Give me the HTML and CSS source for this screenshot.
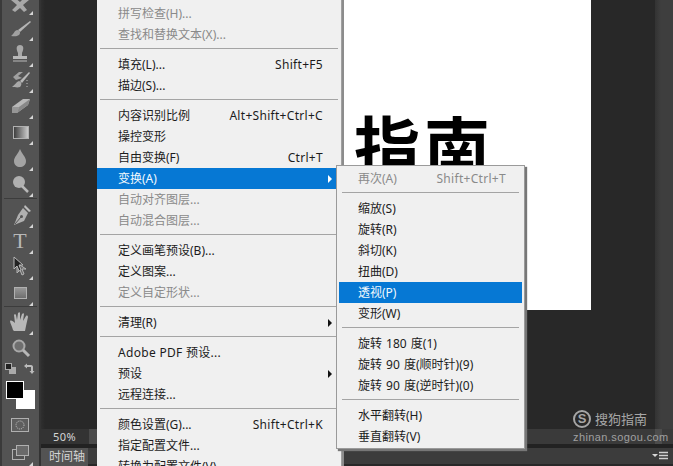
FILE: index.html
```html
<!DOCTYPE html>
<html lang="zh">
<head>
<meta charset="utf-8">
<title>变换 透视</title>
<link rel="stylesheet" href="styles.css">
</head>
<body>
<div class="app">
  <aside class="toolbar">
    <div class="tool first"><svg class="ic" viewBox="0 0 26 26"><path d="M4 11 7 8 13 13 18 8 22 11 16 16 20 21 17 23 13 19 8 23 5 21 10 16Z" fill="#a8a8a8"/><path class="cn" d="M26 22V26H22Z"/></svg></div>
    <div class="tool"><svg class="ic" viewBox="0 0 26 26"><path d="M23 6 24 7 13 17 11 15Z" fill="#b4b4b4"/><path d="M10 15C13 15 14 18 12 20 9 22 7 21 4 21 7 19 7 16 10 15Z" fill="#a0a0a0"/><path class="cn" d="M26 22V26H22Z"/></svg></div>
    <div class="tool"><svg class="ic" viewBox="0 0 26 26"><path d="M11 12C9 8 9 4 13 4 17 4 17 8 15 12V15H11Z" fill="#a8a8a8"/><rect x="6" y="15" width="14" height="3" fill="#b8b8b8"/><rect x="6" y="19" width="14" height="2" fill="#868686"/><path class="cn" d="M26 22V26H22Z"/></svg></div>
    <div class="tool"><svg class="ic" viewBox="0 0 26 26"><path d="M6 10 12 5H16L11 9 15 11 9 13Z" fill="#a0a0a0"/><path d="M22 5 23 6 15 16 13 14Z" fill="#b8b8b8"/><path d="M12 14C15 15 15 18 13 20 10 21 8 20 5 20 8 18 9 15 12 14Z" fill="#a8a8a8"/><path d="M20 13V20" stroke="#bbb" stroke-dasharray="1 2"/><path class="cn" d="M26 22V26H22Z"/></svg></div>
    <div class="tool"><svg class="ic" viewBox="0 0 26 26"><path d="M5 14 16 6H23L21 12 10 20H5Z" fill="#b8b8b8"/><path d="M5 14H12L10 20H5Z" fill="#969696"/><path d="M12 14 23 6 21 12 10 20Z" fill="#888"/><path class="cn" d="M26 22V26H22Z"/></svg></div>
    <div class="tool"><svg class="ic" viewBox="0 0 26 26"><defs><linearGradient id="g1"><stop offset="0" stop-color="#3a3a3a"/><stop offset="1" stop-color="#cfcfcf"/></linearGradient></defs><rect x="6.500" y="7.500" width="15" height="12" fill="url(#g1)" stroke="#b0b0b0"/><path class="cn" d="M26 22V26H22Z"/></svg></div>
    <div class="tool"><svg class="ic" viewBox="0 0 26 26"><path d="M13 4C15 9 19 12 19 16 19 20 16 22 13 22 10 22 7 20 7 16 7 12 11 9 13 4Z" fill="#a4a4a4"/><path class="cn" d="M26 22V26H22Z"/></svg></div>
    <div class="tool"><svg class="ic" viewBox="0 0 26 26"><circle cx="12" cy="11" r="6" fill="#b0b0b0"/><path d="M15 15 21 21" stroke="#b8b8b8" stroke-width="2.500"/><path class="cn" d="M26 22V26H22Z"/></svg></div>
    <div class="sep"></div>
    <div class="tool"><svg class="ic" viewBox="0 0 26 26"><path d="M16 6 21 11 17 19 7 23 11 13Z" fill="#b0b0b0"/><path d="M8 22 14 15" stroke="#555"/><circle cx="14.500" cy="14.500" r="1.500" fill="#555"/><path d="M18 3 24 9 22 10 17 5Z" fill="#bdbdbd"/><path class="cn" d="M26 22V26H22Z"/></svg></div>
    <div class="tool"><svg class="ic" viewBox="0 0 26 26"><text x="13" y="20" text-anchor="middle" class="tglyph">T</text><path class="cn" d="M26 22V26H22Z"/></svg></div>
    <div class="tool"><svg class="ic" viewBox="0 0 26 26"><path d="M10 9V19L13 16 15 21 17 20 15 15 19 15Z" fill="#6a6a6a" stroke="#b4b4b4"/><path d="M7 3V15L10 12 12 17 14 16 12 11 16 11Z" fill="#222" stroke="#b8b8b8"/><path class="cn" d="M26 22V26H22Z"/></svg></div>
    <div class="tool"><svg class="ic" viewBox="0 0 26 26"><defs><linearGradient id="g2" x2="0" y2="1"><stop offset="0" stop-color="#999"/><stop offset="1" stop-color="#6c6c6c"/></linearGradient></defs><rect x="7.500" y="7.500" width="12" height="11" fill="url(#g2)" stroke="#b0b0b0"/><path class="cn" d="M26 22V26H22Z"/></svg></div>
    <div class="sep low"></div>
    <div class="tool"><svg class="ic" viewBox="0 0 26 26"><path d="M6 21C5 17 3 14 3 12 4 11 6 12 8 14L7 6C7 5 9 5 9 6L10 11 11 4C12 3 13 3 13 4V11L15 5C16 4 17 4 17 5L16 12 19 7C20 6 21 7 21 8L19 17 18 22H7Z" fill="#b8b8b8"/><path class="cn" d="M26 22V26H22Z"/></svg></div>
    <div class="tool"><svg class="ic" viewBox="0 0 26 26"><circle cx="12" cy="11" r="5.500" fill="#6e6e6e" stroke="#a8a8a8" stroke-width="2"/><path d="M16 15 22 21" stroke="#b8b8b8" stroke-width="3"/></svg></div>
    <div class="swatch-mini">
      <svg class="mini" viewBox="0 0 12 12"><rect x="4" y="4" width="7" height="7" fill="#aaa"/><rect x="0.500" y="0.500" width="6" height="6" fill="#222" stroke="#aaa"/></svg>
      <svg class="mini" viewBox="0 0 12 12"><path d="M1 3 4 0.500V2H8C9.500 2 10 3 10 4V8H11.500L9 11 6.500 8H8V4H4V5.500Z" fill="#bbb"/></svg>
    </div>
    <div class="swatches"><span class="bg"></span><span class="fg"></span></div>
    <div class="tool mask"><svg class="maskic" viewBox="0 0 18 14"><rect x="0.500" y="0.500" width="17" height="13" fill="#5e5e5e" stroke="#b0b0b0"/><circle cx="9" cy="7" r="4" fill="none" stroke="#c8c8c8" stroke-dasharray="1 1"/></svg></div>
    <div class="tool screen"><svg class="ic" viewBox="0 0 26 26"><rect x="5.500" y="9.500" width="12" height="10" fill="none" stroke="#b0b0b0"/><rect x="9.500" y="5.500" width="12" height="10" fill="#6a6a6a" stroke="#b0b0b0"/><path class="cn" d="M26 22V26H22Z"/></svg></div>
  </aside>

  <main class="main">
    <section class="canvas">
      <div class="stage">
        <div class="doc"><div class="doc-title"><span class="title-lead">搜狗</span>指南</div></div>
      </div>
      <div class="dock"></div>
    </section>
    <div class="status"><span class="zoomval">50%</span><span class="scroll-thumb"></span><span class="scroll-end"></span></div>
    <div class="panel">
      <span class="tab">时间轴</span>
      <svg class="panel-menu" viewBox="0 0 16 10"><path d="M0 3H6L3 6Z" fill="#d8d8d8"/><path d="M7 1.500H16M7 4.500H16M7 7.500H16" stroke="#d0d0d0" stroke-width="1.400"/></svg>
    </div>
  </main>

  <nav class="menu">
    <div class="row off"><span>拼写检查(H)...</span></div>
    <div class="row off"><span>查找和替换文本(X)...</span></div>
    <div class="rule"></div>
    <div class="row"><span>填充(L)...</span><kbd>Shift+F5</kbd></div>
    <div class="row"><span>描边(S)...</span></div>
    <div class="rule"></div>
    <div class="row"><span>内容识别比例</span><kbd>Alt+Shift+Ctrl+C</kbd></div>
    <div class="row"><span>操控变形</span></div>
    <div class="row"><span>自由变换(F)</span><kbd>Ctrl+T</kbd></div>
    <div class="row on sub"><span>变换(A)</span></div>
    <div class="row off"><span>自动对齐图层...</span></div>
    <div class="row off"><span>自动混合图层...</span></div>
    <div class="rule"></div>
    <div class="row"><span>定义画笔预设(B)...</span></div>
    <div class="row"><span>定义图案...</span></div>
    <div class="row off"><span>定义自定形状...</span></div>
    <div class="rule"></div>
    <div class="row sub"><span>清理(R)</span></div>
    <div class="rule"></div>
    <div class="row"><span class="latin">Adobe PDF 预设...</span></div>
    <div class="row sub"><span>预设</span></div>
    <div class="row"><span>远程连接...</span></div>
    <div class="rule"></div>
    <div class="row"><span>颜色设置(G)...</span><kbd>Shift+Ctrl+K</kbd></div>
    <div class="row"><span>指定配置文件...</span></div>
    <div class="row"><span>转换为配置文件(V)...</span></div>
  </nav>

  <nav class="submenu">
    <div class="row off"><span>再次(A)</span><kbd>Shift+Ctrl+T</kbd></div>
    <div class="rule"></div>
    <div class="row"><span>缩放(S)</span></div>
    <div class="row"><span>旋转(R)</span></div>
    <div class="row"><span>斜切(K)</span></div>
    <div class="row"><span>扭曲(D)</span></div>
    <div class="row on"><span>透视(P)</span></div>
    <div class="row"><span>变形(W)</span></div>
    <div class="rule"></div>
    <div class="row"><span>旋转 180 度(1)</span></div>
    <div class="row"><span>旋转 90 度(顺时针)(9)</span></div>
    <div class="row"><span>旋转 90 度(逆时针)(0)</span></div>
    <div class="rule"></div>
    <div class="row"><span>水平翻转(H)</span></div>
    <div class="row"><span>垂直翻转(V)</span></div>
  </nav>

  <div class="watermark">
    <div class="wm-top"><span class="wm-logo">S</span><span class="wm-name">搜狗指南</span></div>
    <div class="wm-url">zhinan.sogou.com</div>
  </div>
</div>
</body>
</html>
```

FILE: styles.css
```css
* { box-sizing: border-box; }
html, body { margin: 0; padding: 0; height: 466px; overflow: hidden; background: #282828; }
body { font-family: "Noto Sans", "Noto Sans CJK SC", sans-serif; font-size: 12px; }

.app { position: relative; display: flex; width: 673px; height: 466px; overflow: hidden; }

/* Tool strip */
.toolbar {
  flex: none; width: 41px; height: 466px; overflow: hidden;
  display: flex; flex-direction: column; align-items: stretch;
  background: #535353;
  border-left: 2px solid #3a3a3a;
  border-right: 2px solid #333;
}
.tool { flex: none; height: 26px; display: flex; justify-content: center; margin-left: -2px; margin-right: -1px; }
.tool.first { margin-top: -11px; }
.ic { width: 26px; height: 26px; display: block; }
.cn { fill: #d4d4d4; }
.tglyph { font-family: "Liberation Serif", serif; font-size: 22px; fill: #b8b8b8; }
.sep { flex: none; height: 4px; margin: 1px 2px 0; border-top: 1px solid #3c3c3c; }
.sep.low { height: 3px; margin-top: 0; }
.swatch-mini { flex: none; height: 19px; display: flex; justify-content: space-between; padding: 0 4px 0 3px; margin-top: 1px; }
.mini { width: 12px; height: 12px; margin-top: 1px; }
.swatches { position: relative; flex: none; height: 35px; margin-top: 0; }
.fg, .bg { position: absolute; display: block; width: 18px; height: 18px; border: 1px solid #fff; }
.fg { left: 4px; top: 0; background: #000; }
.bg { left: 14px; top: 9px; width: 19px; height: 19px; background: #fff; }
.tool.mask { height: 14px; margin-top: 2px; }
.maskic { width: 18px; height: 14px; }
.tool.screen { margin-top: 8px; }

/* Main */
.main { flex: 1; min-width: 0; display: flex; flex-direction: column; height: 466px; background: #222; }
.canvas { flex: none; height: 429px; display: flex; background: #282828; }
.stage { flex: 1; min-width: 0; background: linear-gradient(90deg, #2f2f2f, #282828 4px); }
.doc { width: 494px; height: 310px; margin-left: 56px; background: #fff; padding: 103px 97px 0 0; overflow: hidden; }
.doc-title {
  text-align: right; white-space: nowrap; letter-spacing: 4px;
  font-family: "Noto Sans CJK SC", sans-serif; font-weight: 700; font-size: 66px; line-height: 80px; color: #000;
}
.title-lead { margin-right: 6px; }
.dock { flex: none; width: 18px; background: linear-gradient(90deg, #333, #3e3e3e 6px); }

.status { flex: none; height: 15px; display: flex; align-items: center; background: #3a3a3a; }
.zoomval { width: 48px; padding-left: 12px; font-size: 11px; line-height: 15px; color: #d6d6d6; letter-spacing: 0.500px; background: #333; }
.scroll-thumb { width: 10px; height: 15px; background: #4a4a4a; }
.scroll-end { margin-left: auto; margin-right: 11px; width: 7px; height: 15px; background: #4c4c4c; }

.panel { flex: none; height: 18px; margin-top: 4px; display: flex; align-items: stretch; justify-content: space-between; background: #3c3c3c; border-bottom: 2px solid #282828; }
.tab { width: 47px; padding-left: 8px; margin-bottom: -2px; font-size: 12px; line-height: 18px; color: #d4d4d4; background: #535353; }
.panel-menu { width: 16px; height: 10px; margin: 3px 5px 0 0; }

/* Menus */
.menu, .submenu { color: #1c1c1c; background: #f0f0f0; font-size: 12px; }
.menu {
  position: absolute; left: 97px; top: 0; width: 244px; height: 466px; overflow: hidden; padding-top: 3px;
  box-shadow: 1px 0 0 #a0a0a0, 3px 0 0 #8c8c8c;
}
.submenu {
  position: absolute; left: 336px; top: 165px; width: 189px; height: 284px; padding: 2px;
  border: 1px solid #9a9a9a; box-shadow: 2px 2px 1px #777; word-spacing: 1px;
}
.row { position: relative; height: 21px; line-height: 21px; display: flex; justify-content: space-between; padding: 0 18px 0 21px; white-space: nowrap; }
.submenu .row { padding: 0 16px 0 19px; }
.latin { letter-spacing: 0.300px; }
.off { color: #8a8a8a; }
.on { background: #0678d4; color: #f2f8fd; }
kbd { font: inherit; font-family: "Noto Sans", sans-serif; letter-spacing: 0.300px; }
.sub::after {
  content: ""; position: absolute; right: 9px; top: 7px;
  border-left: 4px solid #111; border-top: 4px solid transparent; border-bottom: 4px solid transparent;
}
.sub.on::after { border-left-color: #fff; }
.rule { height: 9px; padding-top: 3px; margin-left: 3px; margin-right: 3px; }
.rule::before { content: ""; display: block; height: 1px; background: #a4a4a4; }
.submenu .rule { margin: 0 3px; }

/* Watermark */
.watermark { position: absolute; left: 573px; top: 409px; width: 78px; color: #a6a6a6; }
.wm-top { display: flex; align-items: center; gap: 4px; height: 20px; }
.wm-logo {
  flex: none; width: 18px; height: 18px; border-radius: 50%; border: 2px solid #a6a6a6;
  font: 700 13px/14px "Liberation Sans", sans-serif; text-align: center;
}
.wm-name { font-size: 13px; line-height: 20px; white-space: nowrap; }
.wm-url { margin-top: 1px; font-size: 11px; line-height: 14px; white-space: nowrap; letter-spacing: 0.400px; color: #a0a0a0; font-family: "Liberation Sans", sans-serif; }
```
